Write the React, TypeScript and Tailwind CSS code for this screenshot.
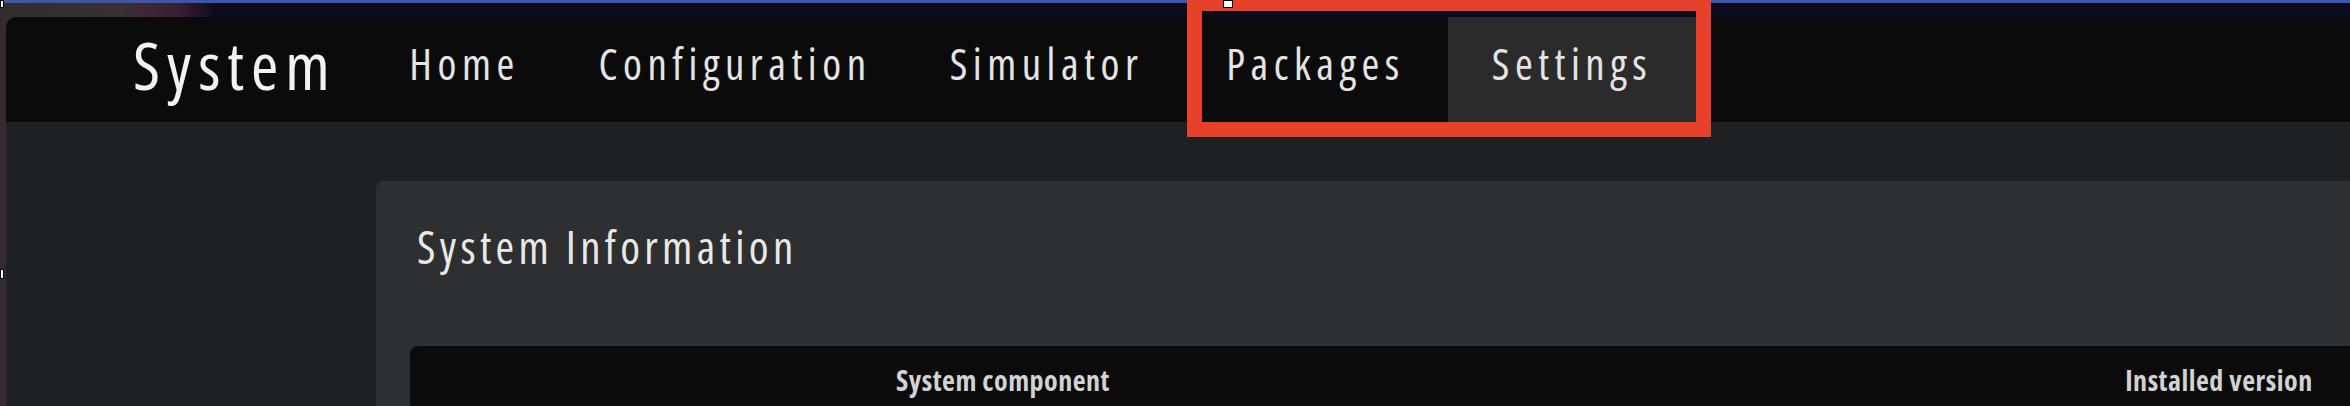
import React from 'react';

const navItems = [
    { label: 'Home', width: 'w-[191px]' },
    { label: 'Configuration', width: 'w-[350px]' },
    { label: 'Simulator', width: 'w-[273px]' },
    { label: 'Packages', width: 'w-[265px]' },
    { label: 'Settings', width: 'w-[248px]' },
];
const activeItem = 'Settings';

export default function App() {
    return (
        <div className="relative h-[406px] w-[2350px] overflow-hidden bg-[#0c0b1e] font-['Open_Sans','Liberation_Sans',sans-serif] font-stretch-condensed">
            {/* desktop strip above the window */}
            <div className="h-[3px] bg-[#3b58a6]" />
            <div className="flex h-[403px] flex-col pl-[6px] pt-[14px] bg-[linear-gradient(90deg,#332c2f_0px,#3a3034_120px,#3b1c36_180px,#0c0b1e_215px)]">
                <div className="flex flex-1 flex-col overflow-hidden rounded-tl-[10px] bg-[#1f2021]">
                    {/* top navigation */}
                    <nav className="flex h-[105px] shrink-0 items-stretch bg-[#0b0b0b]">
                        <div className="flex w-[363px] shrink-0 items-center pb-[12px] pl-[127px]">
                            <span className="text-[66px] leading-none tracking-[7px] text-[#f2f2f2]">System</span>
                        </div>
                        {navItems.map((item) => (
                            <div
                                key={item.label}
                                className={
                                    item.label === activeItem
                                        ? `flex shrink-0 items-center justify-center bg-[#2c2b2c] pb-[12px] ${item.width}`
                                        : `flex shrink-0 items-center justify-center pb-[12px] ${item.width}`
                                }
                            >
                                <span className="text-[43px] leading-none tracking-[5.5px] text-[#e4e4e4]">{item.label}</span>
                            </div>
                        ))}
                    </nav>

                    {/* page content */}
                    <div className="flex flex-1 overflow-hidden pl-[370px] pt-[59px]">
                        <div className="-mr-[40px] flex flex-1 flex-col rounded-tl-[8px] bg-[#2e2f30] pl-[34px] pt-[43px]">
                            <h2 className="ml-[7px] text-[45px] leading-none tracking-[4.3px] text-[#e8e8e8]">System Information</h2>
                            <div className="mt-[77px] flex-1 rounded-tl-[8px] bg-[#0b0b0b]">
                                <div className="grid grid-cols-[1186px_1246px] pt-[20px]">
                                    <div className="text-center text-[28px] font-bold leading-none tracking-[0.5px] text-[#d2d2d2]">System component</div>
                                    <div className="text-center text-[28px] font-bold leading-none tracking-[0.5px] text-[#d2d2d2]">Installed version</div>
                                </div>
                            </div>
                        </div>
                    </div>
                </div>
            </div>

            {/* annotation box around Packages / Settings */}
            <div className="absolute left-[1187px] top-[-4px] h-[141px] w-[524px] border-[15px] border-[#e8412b]" />

            {/* selection handles from the screenshot tool */}
            <div className="absolute left-0 top-0 h-[8px] w-[4px] border border-black bg-white" />
            <div className="absolute left-0 top-[269px] h-[10px] w-[4px] border border-black bg-white" />
            <div className="absolute left-[1223px] top-0 h-[8px] w-[10px] border border-black bg-white" />
        </div>
    );
}
